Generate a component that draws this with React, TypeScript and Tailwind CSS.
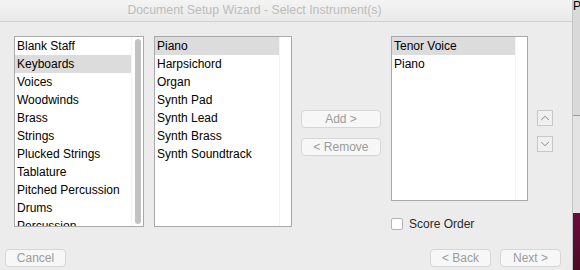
import { ChevronDown, ChevronUp } from 'lucide-react';

const families = [
  'Blank Staff',
  'Keyboards',
  'Voices',
  'Woodwinds',
  'Brass',
  'Strings',
  'Plucked Strings',
  'Tablature',
  'Pitched Percussion',
  'Drums',
  'Percussion',
];

const keyboards = [
  'Piano',
  'Harpsichord',
  'Organ',
  'Synth Pad',
  'Synth Lead',
  'Synth Brass',
  'Synth Soundtrack',
];

const chosen = ['Tenor Voice', 'Piano'];

function ListBox({
  items,
  selected,
  className,
  thumb,
}: {
  items: string[];
  selected: string;
  className: string;
  thumb?: boolean;
}) {
  return (
    <div
      className={`flex shrink-0 overflow-hidden border border-[#a9a9a9] bg-white ${className}`}
    >
      <div className="flex-1 overflow-hidden">
        {items.map((item) => (
          <div
            key={item}
            className={`h-[18px] pl-[2px] text-[12px] leading-[18px] text-black ${
              item === selected ? 'bg-[#dcdcdc]' : ''
            }`}
          >
            {item}
          </div>
        ))}
      </div>
      <div className="flex w-[12px] justify-center border-l border-[#f3f3f3] bg-white py-[2px]">
        {thumb && <div className="w-[6px] rounded-full bg-[#c2c2c2]" />}
      </div>
    </div>
  );
}

function WizardButton({ label, className }: { label: string; className: string }) {
  return (
    <div
      className={`flex h-[18px] shrink-0 items-center justify-center rounded-[4px] border border-[#d6d6d6] bg-[#f7f7f7] text-[12px] text-[#9b9b9b] ${className}`}
    >
      {label}
    </div>
  );
}

export default function App() {
  return (
    <div className="flex h-[270px] w-[580px] overflow-hidden font-['Liberation_Sans',Arial,sans-serif]">
      <div className="flex w-[573px] shrink-0 flex-col border-r border-[#c4c4c4] bg-[#ececec]">
        <div className="flex h-[22px] items-center justify-center border-b border-[#d2d2d2] bg-gradient-to-b from-[#f4f4f4] to-[#e9e9e9] pr-[63px] text-[12.3px] text-[#bcbcbc]">
          Document Setup Wizard - Select Instrument(s)
        </div>

        <div className="flex pl-[14px] pt-[14px]">
          <ListBox
            items={families}
            selected="Keyboards"
            className="h-[191px] w-[130px]"
            thumb
          />
          <ListBox
            items={keyboards}
            selected="Piano"
            className="ml-[10px] h-[191px] w-[138px]"
          />

          <div className="ml-[9px] flex w-[80px] shrink-0 flex-col gap-[10px] pt-[74px]">
            <WizardButton label="Add >" className="w-full" />
            <WizardButton label="< Remove" className="w-full" />
          </div>

          <div className="ml-[10px] flex shrink-0 flex-col">
            <ListBox
              items={chosen}
              selected="Tenor Voice"
              className="h-[165px] w-[137px]"
            />
            <div className="mt-[14px] flex items-center gap-[6px]">
              <div className="h-[12px] w-[12px] rounded-[2px] border border-[#b4b4b4] bg-white" />
              <span className="text-[12px] text-[#2a2a2a]">Score Order</span>
            </div>
          </div>

          <div className="ml-[9px] flex shrink-0 flex-col gap-[10px] pt-[74px]">
            <div className="flex h-[16px] w-[16px] items-center justify-center border border-[#c8c8c8] bg-[#f0f0f0] text-[#666]">
              <ChevronUp size={14} strokeWidth={1.3} />
            </div>
            <div className="flex h-[16px] w-[16px] items-center justify-center border border-[#c8c8c8] bg-[#f0f0f0] text-[#666]">
              <ChevronDown size={14} strokeWidth={1.3} />
            </div>
          </div>
        </div>

        <div className="mt-[16px] flex pl-[5px] pr-[11px]">
          <WizardButton label="Cancel" className="w-[61px]" />
          <div className="ml-auto flex gap-[9px]">
            <WizardButton label="< Back" className="w-[61px]" />
            <WizardButton label="Next >" className="w-[61px]" />
          </div>
        </div>
      </div>

      <div className="flex w-[7px] shrink-0 flex-col overflow-hidden">
        <div className="h-[116px] border-b border-[#9c9c9c] bg-[#d9d9d9] text-[12px] leading-[12px] text-black">
          P
        </div>
        <div className="h-[97px] bg-[#e3e3e3]" />
        <div className="flex-1 bg-gradient-to-b from-[#6b0b3e] to-[#4a0a24]" />
      </div>
    </div>
  );
}
